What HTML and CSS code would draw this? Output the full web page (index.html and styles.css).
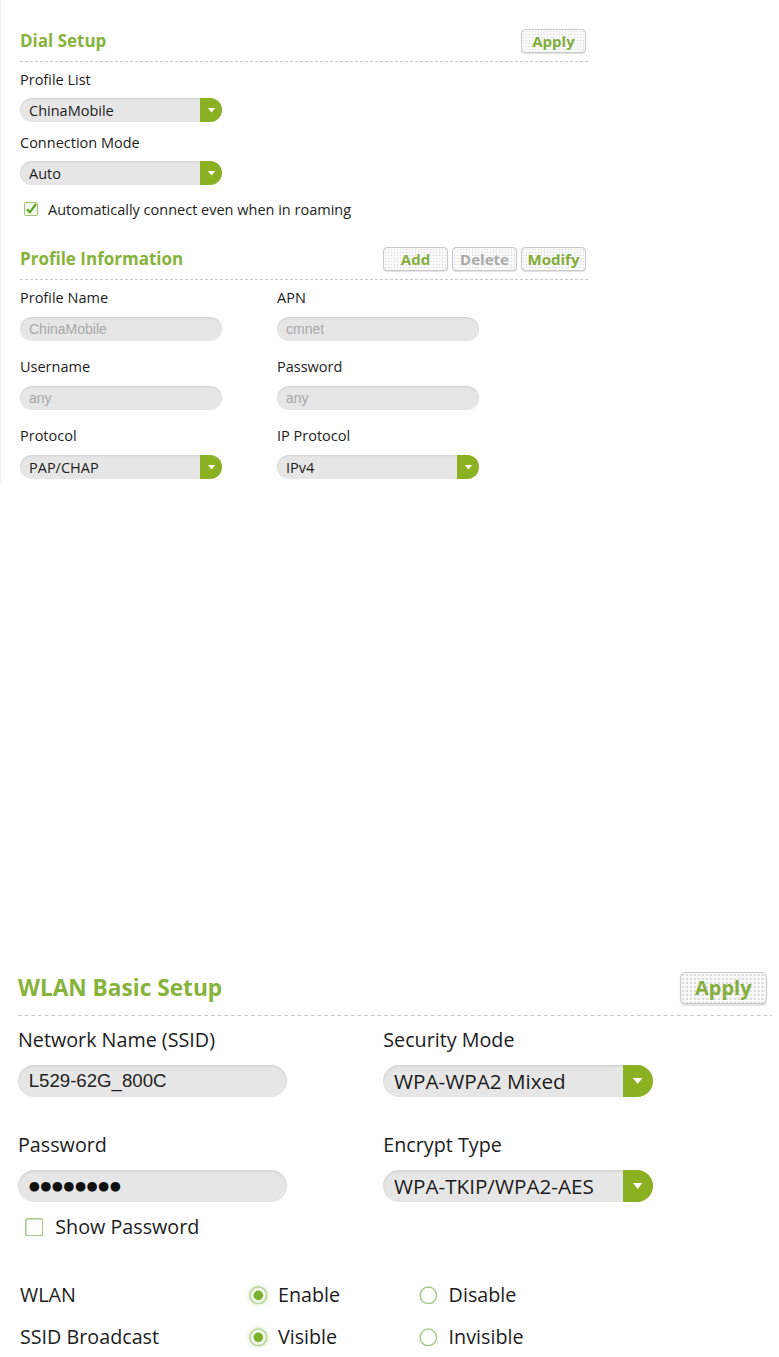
FILE: index.html
```html
<!DOCTYPE html>
<html lang="en">
<head>
<meta charset="utf-8">
<title>Dial Setup</title>
<link rel="stylesheet" href="styles.css">
</head>
<body>
<section class="panel panel-dial">
  <div class="head">
    <h2>Dial Setup</h2>
    <div class="btns"><button class="btn">Apply</button></div>
  </div>
  <div class="stack">
    <div class="field">
      <div class="label">Profile List</div>
      <div class="ctrl select"><span class="val">ChinaMobile</span><span class="arrow"><svg width="7" height="5" viewBox="0 0 7 5"><path d="M0 0H7L3.5 4.5Z" fill="#fff"/></svg></span></div>
    </div>
    <div class="field">
      <div class="label">Connection Mode</div>
      <div class="ctrl select"><span class="val">Auto</span><span class="arrow"><svg width="7" height="5" viewBox="0 0 7 5"><path d="M0 0H7L3.5 4.5Z" fill="#fff"/></svg></span></div>
    </div>
  </div>
  <label class="check check-roam">
    <svg class="box" width="14" height="14" viewBox="0 0 14 14"><rect x="0.5" y="0.5" width="13" height="13" rx="1" fill="#f4f8ee" stroke="#9cc46c"/><path d="M3 7.2 L5.9 10.3 L12 1.8" fill="none" stroke="#5ea52a" stroke-width="2.3" stroke-linejoin="round"/></svg>
    <span>Automatically connect even when in roaming</span>
  </label>

  <div class="head head-profile">
    <h2>Profile Information</h2>
    <div class="btns">
      <button class="btn">Add</button>
      <button class="btn btn-off">Delete</button>
      <button class="btn">Modify</button>
    </div>
  </div>
  <div class="grid grid-profile">
    <div class="field">
      <div class="label">Profile Name</div>
      <div class="ctrl input"><span class="val ph">ChinaMobile</span></div>
    </div>
    <div class="field">
      <div class="label">APN</div>
      <div class="ctrl input"><span class="val ph">cmnet</span></div>
    </div>
    <div class="field">
      <div class="label">Username</div>
      <div class="ctrl input"><span class="val ph">any</span></div>
    </div>
    <div class="field">
      <div class="label">Password</div>
      <div class="ctrl input"><span class="val ph">any</span></div>
    </div>
    <div class="field">
      <div class="label">Protocol</div>
      <div class="ctrl select"><span class="val">PAP/CHAP</span><span class="arrow"><svg width="7" height="5" viewBox="0 0 7 5"><path d="M0 0H7L3.5 4.5Z" fill="#fff"/></svg></span></div>
    </div>
    <div class="field">
      <div class="label">IP Protocol</div>
      <div class="ctrl select"><span class="val">IPv4</span><span class="arrow"><svg width="7" height="5" viewBox="0 0 7 5"><path d="M0 0H7L3.5 4.5Z" fill="#fff"/></svg></span></div>
    </div>
  </div>
</section>

<section class="panel panel-wlan">
  <div class="head">
    <h2>WLAN Basic Setup</h2>
    <div class="btns"><button class="btn">Apply</button></div>
  </div>
  <div class="grid grid-wlan">
    <div class="field">
      <div class="label">Network Name (SSID)</div>
      <div class="ctrl input"><span class="val txt">L529-62G_800C</span></div>
    </div>
    <div class="field">
      <div class="label">Security Mode</div>
      <div class="ctrl select"><span class="val">WPA-WPA2 Mixed</span><span class="arrow"><svg width="7" height="5" viewBox="0 0 7 5"><path d="M0 0H7L3.5 4.5Z" fill="#fff"/></svg></span></div>
    </div>
    <div class="field">
      <div class="label">Password</div>
      <div class="ctrl input"><span class="val dots">●●●●●●●●</span></div>
    </div>
    <div class="field">
      <div class="label">Encrypt Type</div>
      <div class="ctrl select"><span class="val">WPA-TKIP/WPA2-AES</span><span class="arrow"><svg width="7" height="5" viewBox="0 0 7 5"><path d="M0 0H7L3.5 4.5Z" fill="#fff"/></svg></span></div>
    </div>
  </div>
  <label class="check check-show">
    <svg class="box" width="14" height="14" viewBox="0 0 14 14"><rect x="0.6" y="0.6" width="12.8" height="12.8" rx="1.5" fill="#fff" stroke="#a9c98a" stroke-width="1.2"/></svg>
    <span>Show Password</span>
  </label>
  <div class="radios">
    <div class="rrow">
      <span class="rlabel">WLAN</span>
      <span class="ropt"><svg class="radio on" width="14" height="14" viewBox="0 0 14 14"><circle cx="7" cy="7" r="6.2" fill="#f3f7ee" stroke="#b9d49c" stroke-width="1.1"/><circle cx="7" cy="7" r="3.6" fill="#79b12c"/></svg>Enable</span>
      <span class="ropt"><svg class="radio" width="14" height="14" viewBox="0 0 14 14"><circle cx="7" cy="7" r="6.2" fill="#fff" stroke="#a9c98a" stroke-width="1.1"/></svg>Disable</span>
    </div>
    <div class="rrow">
      <span class="rlabel">SSID Broadcast</span>
      <span class="ropt"><svg class="radio on" width="14" height="14" viewBox="0 0 14 14"><circle cx="7" cy="7" r="6.2" fill="#f3f7ee" stroke="#b9d49c" stroke-width="1.1"/><circle cx="7" cy="7" r="3.6" fill="#79b12c"/></svg>Visible</span>
      <span class="ropt"><svg class="radio" width="14" height="14" viewBox="0 0 14 14"><circle cx="7" cy="7" r="6.2" fill="#fff" stroke="#a9c98a" stroke-width="1.1"/></svg>Invisible</span>
    </div>
  </div>
</section>
</body>
</html>
```

FILE: styles.css
```css
* { box-sizing: border-box; }

body {
  margin: 0;
  background: #fff;
  font-family: "Open Sans", "Noto Sans", sans-serif;
  color: #1c1c1c;
}

.panel-dial {
  width: 590px;
  padding: 29px 0 4px 19px;
  border-left: 1px solid #f1f1f1;
}

.head {
  display: flex;
  justify-content: space-between;
  align-items: center;
  height: 33px;
  padding-bottom: 9px;
  background: linear-gradient(to right, #c8c8c8 3px, transparent 3px) left bottom / 5px 1px repeat-x;
}

h2 {
  margin: 0;
  font-size: 17px;
  line-height: 24px;
  font-weight: 700;
  color: #86b33a;
}

.btns {
  display: flex;
  gap: 4px;
  margin-right: 4px;
}

.btn {
  width: 65px;
  height: 24px;
  padding: 0;
  border: 1px solid #c9c9c9;
  border-radius: 4px;
  background-color: #f9f9f9;
  background-image: radial-gradient(circle, #d9d9d9 0.7px, transparent 1px);
  background-size: 3px 3px;
  box-shadow: 0 1px 1px rgba(0,0,0,0.12);
  font-family: "Open Sans", sans-serif;
  font-size: 15px;
  font-weight: 700;
  color: #83ad3c;
  line-height: 20px;
}

.btn-off { color: #a9a9a9; }

.stack {
  display: flex;
  flex-direction: column;
  gap: 12px;
  margin-top: 9px;
}

.label {
  height: 18px;
  line-height: 18px;
  font-size: 14.5px;
  white-space: nowrap;
}

.ctrl {
  margin-top: 9px;
  width: 202px;
  height: 24px;
  border-radius: 12px;
  background: #e6e6e6;
  box-shadow: inset 0 1px 2px rgba(0,0,0,0.10);
  display: flex;
  align-items: center;
  overflow: hidden;
}

.val {
  flex: 1;
  padding-left: 9px;
  font-size: 14.5px;
  white-space: nowrap;
}

.ph {
  font-family: "Liberation Sans", Arial, sans-serif;
  font-size: 14px;
  color: #a8a8a8;
}

.txt {
  font-family: "Liberation Sans", Arial, sans-serif;
  font-size: 14px;
  color: #222;
  padding-left: 8px;
}

.dots {
  font-family: "DejaVu Sans", sans-serif;
  font-size: 9.5px;
  letter-spacing: 0.4px;
  padding-left: 8px;
  color: #111;
}

.arrow {
  width: 22px;
  height: 100%;
  background: #8bb022;
  border-radius: 0 7px 7px 0;
  display: flex;
  align-items: center;
  justify-content: center;
  padding-top: 1px;
}

.check {
  display: flex;
  align-items: center;
  height: 18px;
  font-size: 14.5px;
}

.check-roam {
  margin-top: 15px;
  padding-left: 4px;
  gap: 10px;
}

.head-profile { margin-top: 29px; }

.grid {
  display: grid;
  grid-template-columns: 202px 202px;
}

.grid-profile {
  column-gap: 55px;
  row-gap: 17px;
  margin-top: 9px;
}

.grid-profile .ctrl { margin-top: 10px; }

/* WLAN panel, rendered at a larger scale */
.panel-wlan {
  zoom: 1.3333;
  width: 579px;
  margin-top: 367px;
  padding-left: 13.5px;
}

.panel-wlan .label { font-size: 14.8px; }
.panel-wlan .select .val { font-size: 15.5px; padding-left: 8px; }

.grid-wlan {
  column-gap: 72px;
  row-gap: 27px;
  margin-top: 9px;
}

.grid-wlan .ctrl { margin-top: 9.5px; }

.check-show {
  margin-top: 10px;
  padding-left: 5px;
  gap: 9px;
  font-size: 14.8px;
}

.radios {
  display: flex;
  flex-direction: column;
  gap: 13.5px;
  margin-top: 32px;
  padding-left: 1.5px;
}

.rrow {
  display: grid;
  grid-template-columns: 171.5px 128px auto;
  align-items: center;
  height: 18px;
  font-size: 14.8px;
}

.ropt {
  display: flex;
  align-items: center;
  gap: 8px;
}

.radio.on { filter: drop-shadow(0 0 1.5px rgba(120,180,50,0.45)); }
```
